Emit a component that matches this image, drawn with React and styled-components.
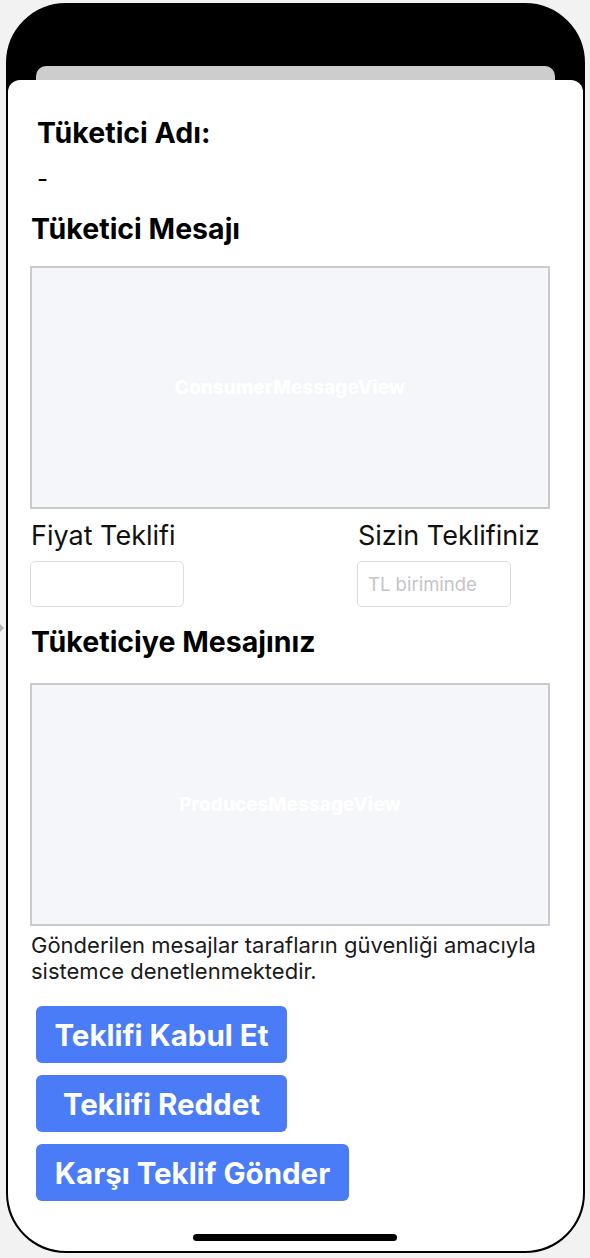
import React from 'react'
import styled, { createGlobalStyle } from 'styled-components'

const GlobalStyle = createGlobalStyle`
    html, body {
        margin: 0;
        padding: 0;
        background: #f2f2f2;
    }
    body {
        font-family: Inter, "Noto Sans", sans-serif;
        color: #000;
    }
`

export default function App() {
    return (
        <>
            <GlobalStyle />
            <Page>
                <SideArrow />
                <Phone>
                    <StackCard />
                    <Sheet>
                        <NameLabel>Tüketici Adı:</NameLabel>
                        <NameValue>-</NameValue>
                        <SectionTitle $top={18}>Tüketici Mesajı</SectionTitle>
                        <MessageBox $top={20}>ConsumerMessageView</MessageBox>
                        <PriceRow>
                            <PriceCol>
                                <PriceLabel>Fiyat Teklifi</PriceLabel>
                                <PriceInput readOnly value="" />
                            </PriceCol>
                            <PriceCol>
                                <PriceLabel>Sizin Teklifiniz</PriceLabel>
                                <PriceInput placeholder="TL biriminde" />
                            </PriceCol>
                        </PriceRow>
                        <SectionTitle $top={18}>Tüketiciye Mesajınız</SectionTitle>
                        <MessageBox $top={24}>ProducesMessageView</MessageBox>
                        <Notice>
                            Gönderilen mesajlar tarafların güvenliği amacıyla
                            <br />
                            sistemce denetlenmektedir.
                        </Notice>
                        <Actions>
                            <ActionButton $width={251}>Teklifi Kabul Et</ActionButton>
                            <ActionButton $width={251}>Teklifi Reddet</ActionButton>
                            <ActionButton $width={313}>Karşı Teklif Gönder</ActionButton>
                        </Actions>
                        <HomeIndicator />
                    </Sheet>
                </Phone>
            </Page>
        </>
    )
}

const Page = styled.div`
    position: relative;
    width: 590px;
    height: 1258px;
    padding-top: 3px;
    padding-left: 6px;
    box-sizing: border-box;
`

const SideArrow = styled.div`
    position: absolute;
    left: 0;
    top: 624px;
    width: 0;
    height: 0;
    border-top: 4px solid transparent;
    border-bottom: 4px solid transparent;
    border-left: 4px solid #b5b5b5;
`

const Phone = styled.div`
    width: 579px;
    height: 1250px;
    box-sizing: border-box;
    border: 2px solid #000;
    border-radius: 60px;
    background: #000;
    overflow: hidden;
    display: flex;
    flex-direction: column;
    padding-top: 61px;
`

const StackCard = styled.div`
    height: 14px;
    margin: 0 28px 0 28px;
    background: #cdcdcd;
    border-radius: 10px 10px 0 0;
`

const Sheet = styled.div`
    flex: 1;
    background: #fff;
    border-radius: 12px 12px 0 0;
    padding: 36px 33px 0 22px;
    display: flex;
    flex-direction: column;
    position: relative;
`

const NameLabel = styled.div`
    font-size: 28.5px;
    font-weight: 700;
    line-height: 34px;
    padding-left: 7px;
`

const NameValue = styled.div`
    font-size: 24px;
    line-height: 30px;
    margin-top: 14px;
    padding-left: 7px;
`

const SectionTitle = styled.div`
    font-size: 28.5px;
    font-weight: 700;
    line-height: 34px;
    margin-top: ${(p) => p.$top}px;
    padding-left: 1px;
`

const MessageBox = styled.div`
    margin-top: ${(p) => p.$top}px;
    height: 243px;
    box-sizing: border-box;
    border: 2px solid #cbcbcb;
    background: #f5f6fa;
    display: flex;
    align-items: center;
    justify-content: center;
    color: #fff;
    font-size: 19px;
    font-weight: 800;
`

const PriceRow = styled.div`
    display: grid;
    grid-template-columns: 327px 1fr;
    margin-top: 11px;
`

const PriceCol = styled.div`
    display: flex;
    flex-direction: column;
    gap: 9px;
`

const PriceLabel = styled.div`
    font-size: 27px;
    line-height: 32px;
    color: #111;
    padding-left: 1px;
    white-space: nowrap;
`

const PriceInput = styled.input`
    width: 154px;
    height: 46px;
    box-sizing: border-box;
    border: 1px solid #dedede;
    border-radius: 5px;
    padding: 0 10px;
    font-family: Inter, sans-serif;
    font-size: 18.5px;
    outline: none;
    &::placeholder {
        color: #c4c4c8;
    }
`

const Notice = styled.div`
    margin-top: 6px;
    padding-left: 1px;
    font-size: 22px;
    line-height: 26px;
    color: #1a1a1a;
`

const Actions = styled.div`
    display: flex;
    flex-direction: column;
    align-items: flex-start;
    gap: 12px;
    margin-top: 22px;
    padding-left: 6px;
`

const ActionButton = styled.button`
    width: ${(p) => p.$width}px;
    height: 57px;
    border: none;
    border-radius: 6px;
    background: #4a7cf7;
    color: #fff;
    font-family: Inter, sans-serif;
    font-size: 29.5px;
    font-weight: 700;
    padding: 0;
`

const HomeIndicator = styled.div`
    position: absolute;
    left: 185px;
    bottom: 10px;
    width: 204px;
    height: 7px;
    border-radius: 4px;
    background: #000;
`
